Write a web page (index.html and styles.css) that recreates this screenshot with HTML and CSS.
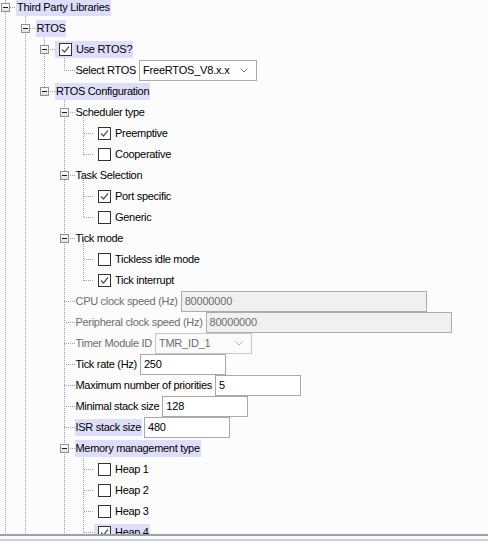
FILE: index.html
```html
<!DOCTYPE html>
<html>
<head>
<meta charset="utf-8">
<link rel="stylesheet" href="styles.css">
</head>
<body>
<div class="tree">
<ul class="root">
 <li>
  <div class="row"><span class="exp"></span><span class="lbl sel">Third Party Libraries</span></div>
  <ul>
   <li>
    <div class="row"><span class="exp"></span><span class="lbl sel">RTOS</span></div>
    <ul>
     <li>
      <div class="row"><span class="exp"></span><span class="lbl sel"><svg class="cb" width="13" height="13" viewBox="0 0 13 13"><rect x="0.5" y="0.5" width="12" height="12" fill="#fff" stroke="#333"/><polyline points="3,6.5 5.5,9 10,3.5" fill="none" stroke="#555" stroke-width="1.2"/></svg>Use RTOS?</span></div>
      <ul>
       <li class="last">
        <div class="row"><span class="sp"></span><span class="lbl">Select RTOS</span><div class="field combo w-rtos"><span>FreeRTOS_V8.x.x</span><svg width="8" height="5" viewBox="0 0 8 5"><polyline points="0.5,0.5 4,4 7.5,0.5" fill="none" stroke="#7a7a7a"/></svg></div></div>
       </li>
      </ul>
     </li>
     <li class="last">
      <div class="row"><span class="exp"></span><span class="lbl sel">RTOS Configuration</span></div>
      <ul>
       <li>
        <div class="row"><span class="exp"></span><span class="lbl">Scheduler type</span></div>
        <ul>
         <li><div class="row"><span class="sp"></span><span class="lbl"><svg class="cb" width="13" height="13" viewBox="0 0 13 13"><rect x="0.5" y="0.5" width="12" height="12" fill="#fff" stroke="#333"/><polyline points="3,6.5 5.5,9 10,3.5" fill="none" stroke="#555" stroke-width="1.2"/></svg>Preemptive</span></div></li>
         <li class="last"><div class="row"><span class="sp"></span><span class="lbl"><svg class="cb" width="13" height="13" viewBox="0 0 13 13"><rect x="0.5" y="0.5" width="12" height="12" fill="#fff" stroke="#333"/></svg>Cooperative</span></div></li>
        </ul>
       </li>
       <li>
        <div class="row"><span class="exp"></span><span class="lbl">Task Selection</span></div>
        <ul>
         <li><div class="row"><span class="sp"></span><span class="lbl"><svg class="cb" width="13" height="13" viewBox="0 0 13 13"><rect x="0.5" y="0.5" width="12" height="12" fill="#fff" stroke="#333"/><polyline points="3,6.5 5.5,9 10,3.5" fill="none" stroke="#555" stroke-width="1.2"/></svg>Port specific</span></div></li>
         <li class="last"><div class="row"><span class="sp"></span><span class="lbl"><svg class="cb" width="13" height="13" viewBox="0 0 13 13"><rect x="0.5" y="0.5" width="12" height="12" fill="#fff" stroke="#333"/></svg>Generic</span></div></li>
        </ul>
       </li>
       <li>
        <div class="row"><span class="exp"></span><span class="lbl">Tick mode</span></div>
        <ul>
         <li><div class="row"><span class="sp"></span><span class="lbl"><svg class="cb" width="13" height="13" viewBox="0 0 13 13"><rect x="0.5" y="0.5" width="12" height="12" fill="#fff" stroke="#333"/></svg>Tickless idle mode</span></div></li>
         <li class="last"><div class="row"><span class="sp"></span><span class="lbl"><svg class="cb" width="13" height="13" viewBox="0 0 13 13"><rect x="0.5" y="0.5" width="12" height="12" fill="#fff" stroke="#333"/><polyline points="3,6.5 5.5,9 10,3.5" fill="none" stroke="#555" stroke-width="1.2"/></svg>Tick interrupt</span></div></li>
        </ul>
       </li>
       <li><div class="row"><span class="sp"></span><span class="lbl dis">CPU clock speed (Hz)</span><div class="field off w-long">80000000</div></div></li>
       <li><div class="row"><span class="sp"></span><span class="lbl dis">Peripheral clock speed (Hz)</span><div class="field off w-long">80000000</div></div></li>
       <li><div class="row"><span class="sp"></span><span class="lbl dis">Timer Module ID</span><div class="field combo off-combo w-timer"><span>TMR_ID_1</span><svg width="8" height="5" viewBox="0 0 8 5"><polyline points="0.5,0.5 4,4 7.5,0.5" fill="none" stroke="#b5b5b5"/></svg></div></div></li>
       <li><div class="row"><span class="sp"></span><span class="lbl">Tick rate (Hz)</span><div class="field w-num">250</div></div></li>
       <li><div class="row"><span class="sp"></span><span class="lbl">Maximum number of priorities</span><div class="field w-num">5</div></div></li>
       <li><div class="row"><span class="sp"></span><span class="lbl">Minimal stack size</span><div class="field w-num">128</div></div></li>
       <li><div class="row"><span class="sp"></span><span class="lbl sel">ISR stack size</span><div class="field w-num">480</div></div></li>
       <li>
        <div class="row"><span class="exp"></span><span class="lbl sel">Memory management type</span></div>
        <ul>
         <li><div class="row"><span class="sp"></span><span class="lbl"><svg class="cb" width="13" height="13" viewBox="0 0 13 13"><rect x="0.5" y="0.5" width="12" height="12" fill="#fff" stroke="#333"/></svg>Heap 1</span></div></li>
         <li><div class="row"><span class="sp"></span><span class="lbl"><svg class="cb" width="13" height="13" viewBox="0 0 13 13"><rect x="0.5" y="0.5" width="12" height="12" fill="#fff" stroke="#333"/></svg>Heap 2</span></div></li>
         <li><div class="row"><span class="sp"></span><span class="lbl"><svg class="cb" width="13" height="13" viewBox="0 0 13 13"><rect x="0.5" y="0.5" width="12" height="12" fill="#fff" stroke="#333"/></svg>Heap 3</span></div></li>
         <li><div class="row"><span class="sp"></span><span class="lbl sel"><svg class="cb" width="13" height="13" viewBox="0 0 13 13"><rect x="0.5" y="0.5" width="12" height="12" fill="#fff" stroke="#333"/><polyline points="3,6.5 5.5,9 10,3.5" fill="none" stroke="#555" stroke-width="1.2"/></svg>Heap 4</span></div></li>
        </ul>
       </li>
      </ul>
     </li>
    </ul>
   </li>
  </ul>
 </li>
</ul>
</div>
<div class="bottombar"></div>
</body>
</html>
```
FILE: styles.css
```css
html, body {
  margin: 0;
  padding: 0;
  height: 542px;
  overflow: hidden;
}
body {
  background: #fcfcfc;
  font-family: "Liberation Sans", Arial, sans-serif;
  font-size: 11px;
  letter-spacing: -0.3px;
  color: #000;
}
.tree {
  margin-top: -3px;
}
ul {
  list-style: none;
  margin: 0;
  padding: 0 0 0 19.5px;
}
ul.root {
  padding-left: 5px;
}
li {
  position: relative;
}
li::before {
  content: "";
  position: absolute;
  left: 0;
  top: -10px;
  bottom: 0;
  width: 1px;
  background: repeating-linear-gradient(to bottom, #a0a0a0 0 1px, transparent 1px 2px) fixed;
}
li.last::before {
  bottom: auto;
  height: 21px;
}
li::after {
  content: "";
  position: absolute;
  left: 0;
  top: 10px;
  width: 11px;
  height: 1px;
  background: repeating-linear-gradient(to right, #a0a0a0 0 1px, transparent 1px 2px) fixed;
}
.row {
  position: relative;
  z-index: 1;
  display: flex;
  align-items: center;
  height: 21px;
  margin-left: -4px;
  white-space: nowrap;
}
.exp, .sp {
  flex: none;
  width: 9px;
  height: 9px;
  margin-right: 6px;
  box-sizing: border-box;
}
.exp {
  position: relative;
  border: 1px solid #919191;
  background: linear-gradient(#ffffff, #e0e0e0);
}
.exp::after {
  content: "";
  position: absolute;
  left: 1px;
  top: 3px;
  width: 5px;
  height: 1px;
  background: #1a1a1a;
}
.lbl {
  display: flex;
  align-items: center;
  height: 17px;
  line-height: 17px;
  padding: 0 1px;
}
.sel {
  background: #dedefb;
}
.dis {
  color: #6d6d6d;
}
.cb {
  flex: none;
  display: block;
  margin: 0 4px 0 3px;
}
.field {
  flex: none;
  box-sizing: border-box;
  height: 21px;
  line-height: 19px;
  border: 1px solid #a9a9a9;
  background: #fff;
  padding: 0 3px;
  margin-left: 2px;
  letter-spacing: -0.2px;
}
.field.off {
  background: #f0f0f0;
  color: #6d6d6d;
  border-color: #adadad;
}
.combo {
  display: flex;
  align-items: center;
  justify-content: space-between;
  padding-right: 8px;
}
.off-combo {
  color: #6d6d6d;
  border-color: #c8c8c8;
  background: #fbfbfb;
}
.w-rtos { width: 118px; }
.w-timer { width: 97px; }
.w-long { width: 246px; }
.w-num { width: 86px; }
.bottombar {
  position: fixed;
  left: 0;
  right: 0;
  bottom: 0;
  height: 6px;
  z-index: 5;
  background: #fcfcfc;
  border-top: 2px solid #a0a0a0;
}
.bottombar::after {
  content: "";
  position: absolute;
  left: 0;
  right: 0;
  top: 3px;
  height: 2px;
  background: #c4d3e8;
}
```
